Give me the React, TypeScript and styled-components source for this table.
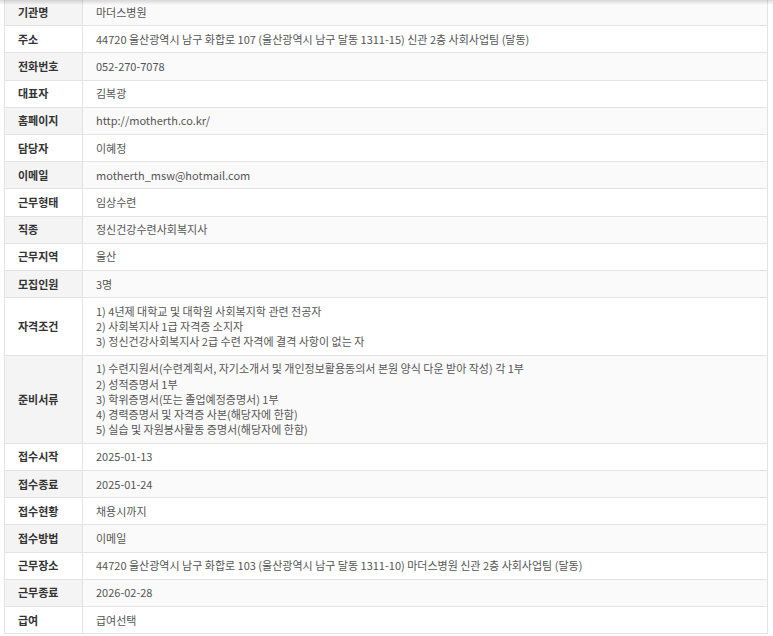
import styled, { createGlobalStyle } from "styled-components";

const GlobalStyle = createGlobalStyle`
  body {
    margin: 0;
    background: #fff;
    font-family: "Noto Sans CJK KR", "Noto Sans", sans-serif;
  }
`;

type Row = { label: string; value: string | string[] };

const rows: Row[] = [
  { label: "기관명", value: "마더스병원" },
  {
    label: "주소",
    value: "44720 울산광역시 남구 화합로 107 (울산광역시 남구 달동 1311-15) 신관 2층 사회사업팀 (달동)",
  },
  { label: "전화번호", value: "052-270-7078" },
  { label: "대표자", value: "김복광" },
  { label: "홈페이지", value: "http://motherth.co.kr/" },
  { label: "담당자", value: "이혜정" },
  { label: "이메일", value: "motherth_msw@hotmail.com" },
  { label: "근무형태", value: "임상수련" },
  { label: "직종", value: "정신건강수련사회복지사" },
  { label: "근무지역", value: "울산" },
  { label: "모집인원", value: "3명" },
  {
    label: "자격조건",
    value: [
      "1) 4년제 대학교 및 대학원 사회복지학 관련 전공자",
      "2) 사회복지사 1급 자격증 소지자",
      "3) 정신건강사회복지사 2급 수련 자격에 결격 사항이 없는 자",
    ],
  },
  {
    label: "준비서류",
    value: [
      "1) 수련지원서(수련계획서, 자기소개서 및 개인정보활용동의서 본원 양식 다운 받아 작성) 각 1부",
      "2) 성적증명서 1부",
      "3) 학위증명서(또는 졸업예정증명서) 1부",
      "4) 경력증명서 및 자격증 사본(해당자에 한함)",
      "5) 실습 및 자원봉사활동 증명서(해당자에 한함)",
    ],
  },
  { label: "접수시작", value: "2025-01-13" },
  { label: "접수종료", value: "2025-01-24" },
  { label: "접수현황", value: "채용시까지" },
  { label: "접수방법", value: "이메일" },
  {
    label: "근무장소",
    value: "44720 울산광역시 남구 화합로 103 (울산광역시 남구 달동 1311-10) 마더스병원 신관 2층 사회사업팀 (달동)",
  },
  { label: "근무종료", value: "2026-02-28" },
  { label: "급여", value: "급여선택" },
];

const App = () => {
  return (
    <>
      <GlobalStyle />
      <Page>
        <InfoTable>
          <tbody>
            {rows.map((row) => (
              <tr key={row.label}>
                <Label>{row.label}</Label>
                <Value>
                  {Array.isArray(row.value)
                    ? row.value.map((line) => <Line key={line}>{line}</Line>)
                    : row.value}
                </Value>
              </tr>
            ))}
          </tbody>
        </InfoTable>
      </Page>
    </>
  );
};
export default App;

const Page = styled.div`
  position: relative;
  width: 773px;
  height: 636px;
  overflow: hidden;
  padding: 0 5px 0 4px;
  box-sizing: border-box;

  &::before {
    content: "";
    position: absolute;
    top: 0;
    left: 0;
    right: 0;
    height: 5px;
    background: linear-gradient(to bottom, rgba(0, 0, 0, 0.14), rgba(0, 0, 0, 0));
    z-index: 2;
  }
`;

const InfoTable = styled.table`
  width: 764px;
  margin-top: -2px;
  border-collapse: collapse;
  border: 1px solid #e3e3e3;
  font-size: 11px;
  line-height: 15.2px;

  tr:nth-child(odd) td {
    background: #fafafa;
  }

  tr:nth-child(odd) th {
    background: #f4f4f4;
  }
`;

const Label = styled.th`
  width: 51px;
  height: 15.2px;
  padding: 5.5px 13px;
  border: 1px solid #e3e3e3;
  background: #fff;
  color: #333;
  font-weight: 700;
  text-align: left;
  vertical-align: middle;
  white-space: nowrap;
`;

const Value = styled.td`
  padding: 5.5px 13px;
  border: 1px solid #e3e3e3;
  background: #fff;
  color: #555;
  text-align: left;
  vertical-align: middle;
`;

const Line = styled.div``;
